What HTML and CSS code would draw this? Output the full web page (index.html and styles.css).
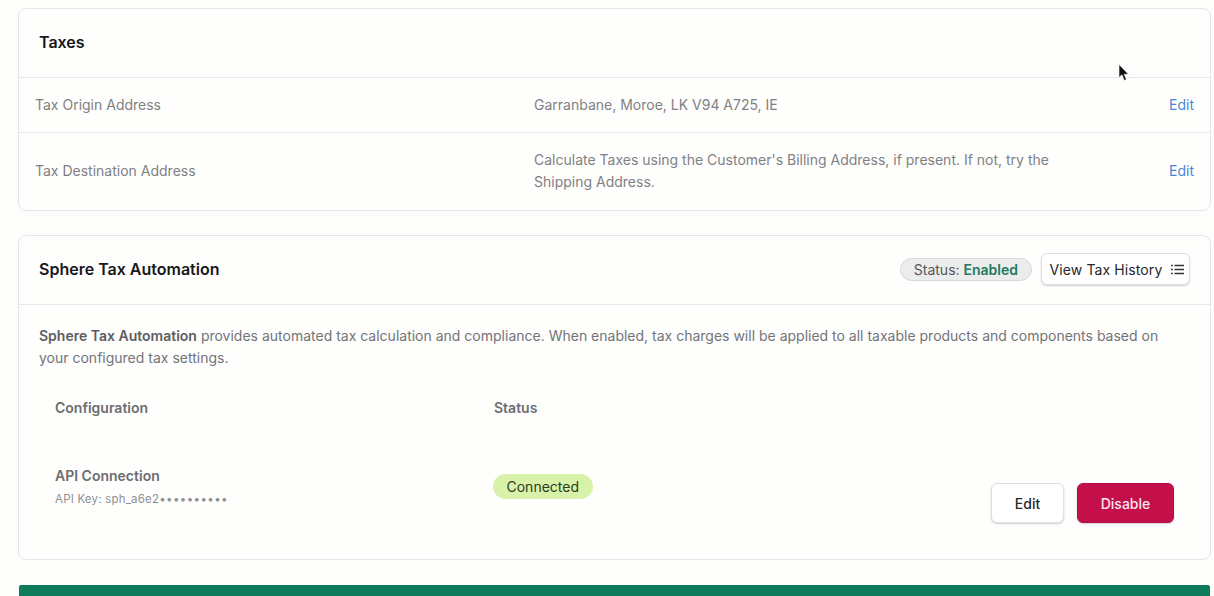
FILE: index.html
```html
<!DOCTYPE html>
<html lang="en">
<head>
  <meta charset="UTF-8" />
  <meta name="viewport" content="width=device-width, initial-scale=1.0"/>
  <title>Tax Settings</title>
  <link rel="stylesheet" href="styles.css">
</head>
<body>
  <main class="page">
    <section class="card taxes-card">
      <header class="card-header taxes-header">
        <h2>Taxes</h2>
      </header>
      <div class="tax-row origin-row">
        <div class="tax-label">Tax Origin Address</div>
        <div class="tax-value">Garranbane, Moroe, LK V94 A725, IE</div>
        <a class="edit-link" href="#">Edit</a>
      </div>
      <div class="tax-row destination-row">
        <div class="tax-label">Tax Destination Address</div>
        <div class="tax-value">Calculate Taxes using the Customer's Billing Address, if present. If not, try the Shipping Address.</div>
        <a class="edit-link" href="#">Edit</a>
      </div>
    </section>

    <section class="card sphere-card">
      <header class="card-header sphere-header">
        <h2>Sphere Tax Automation</h2>
        <div class="header-actions">
          <span class="status-pill">Status: <strong>Enabled</strong></span>
          <button class="btn history-btn">
            View Tax History
            <svg width="13" height="11" viewBox="0 0 13 11" fill="none" stroke="#30333a" stroke-width="1.4">
              <path d="M3.5 1.5H13M3.5 5.5H13M3.5 9.5H13"/>
              <path d="M0 1.5H1.8M0 5.5H1.8M0 9.5H1.8"/>
            </svg>
          </button>
        </div>
      </header>
      <div class="sphere-body">
        <p class="intro"><strong>Sphere Tax Automation</strong> provides automated tax calculation and compliance. When enabled, tax charges will be applied to all taxable products and components based on your configured tax settings.</p>
        <div class="config-table">
          <div class="config-head">
            <div class="col-name">Configuration</div>
            <div>Status</div>
          </div>
          <div class="config-row">
            <div class="col-name">
              <div class="config-title">API Connection</div>
              <div class="config-key">API Key: sph_a6e2<span class="key-dots">••••••••••</span></div>
            </div>
            <div class="col-status"><span class="connected-pill">Connected</span></div>
            <div class="config-actions">
              <button class="btn action-btn">Edit</button>
              <button class="btn action-btn danger-btn">Disable</button>
            </div>
          </div>
        </div>
      </div>
    </section>

    <div class="green-bar"></div>
  </main>

  <!-- Mouse pointer caught in the capture -->
  <svg class="cursor" width="12" height="18" viewBox="0 0 12 18">
    <path d="M1 0.5V13.5L4 10.8L6.2 16.5L8.4 15.6L6.2 10.2H10.5Z" fill="#111" stroke="#fff" stroke-width="0.6"/>
  </svg>
</body>
</html>
```

FILE: styles.css
```css
* {
  box-sizing: border-box;
}

body {
  font-family: Inter, 'Liberation Sans', sans-serif;
  margin: 0;
  height: 596px;
  overflow: hidden;
  background-color: #fdfdfc;
  color: #6f7074;
  font-size: 14px;
}

.page {
  padding: 8px 3px 0 18px;
}

.card {
  background: #fefefd;
  border: 1px solid #e4e5e8;
  border-radius: 8px;
}

.taxes-card {
  margin-bottom: 24px;
}

.sphere-card {
  margin-bottom: 25px;
}

.card-header {
  display: flex;
  align-items: center;
  justify-content: space-between;
  border-bottom: 1px solid #e6e7ea;
  padding-bottom: 2px;
}

.card-header h2 {
  margin: 0;
  font-size: 16px;
  font-weight: 600;
  color: #17181b;
}

.taxes-header {
  height: 69px;
  padding-left: 20px;
}

.sphere-header {
  height: 69px;
  padding-left: 20px;
  padding-right: 20px;
}

.tax-row {
  display: flex;
  align-items: center;
  padding: 0 16px 2px;
}

.origin-row {
  height: 55px;
  border-bottom: 1px solid #e6e7ea;
}

.destination-row {
  height: 77px;
}

.tax-label {
  width: 499px;
  flex-shrink: 0;
  color: #808183;
}

.tax-value {
  flex: 1;
  max-width: 540px;
  margin-top: 1px;
  line-height: 22px;
  color: #808183;
}

.edit-link {
  margin-left: auto;
  color: #4a86d8;
  text-decoration: none;
}

.header-actions {
  display: flex;
  align-items: center;
  gap: 9px;
}

.status-pill {
  height: 23px;
  padding: 0 13px 0 13px;
  display: flex;
  align-items: center;
  background: #ebecec;
  border: 1px solid #d6d7d8;
  border-radius: 12px;
  color: #55565a;
  white-space: pre;
}

.status-pill strong {
  color: #237a5e;
  font-weight: 600;
}

.btn {
  font-family: inherit;
  font-size: 14px;
  font-weight: 500;
  background: #fff;
  border: 1px solid #dfe0e3;
  border-radius: 6px;
  box-shadow: 0 1px 2px rgba(0,0,0,0.18);
  color: #26272b;
}

.history-btn {
  height: 32px;
  width: 149px;
  display: flex;
  align-items: center;
  justify-content: center;
  gap: 9px;
  padding: 0 0 0 3px;
  font-weight: 400;
  letter-spacing: 0.1px;
}

.sphere-body {
  padding: 20px 20px 36px;
}

.intro {
  margin: 0;
  line-height: 22px;
  color: #737478;
}

.intro strong {
  font-weight: 600;
  color: #5c5d61;
}

.config-table {
  padding: 0 16px;
}

.config-head {
  display: flex;
  margin-top: 28px;
  line-height: 22px;
  font-weight: 600;
  color: #6c6d71;
}

.col-name {
  width: 439px;
  flex-shrink: 0;
}

.config-row {
  display: flex;
  align-items: flex-start;
  margin-top: 47px;
}

.config-title {
  font-weight: 600;
  line-height: 20px;
  color: #6c6d71;
}

.config-key {
  margin-top: 5px;
  font-size: 11.5px;
  line-height: 16px;
  color: #8f9094;
  letter-spacing: 0.2px;
}

.key-dots {
  font-size: 11.5px;
  letter-spacing: 0.4px;
}

.col-status {
  margin-top: 8px;
  margin-left: -1px;
}

.connected-pill {
  display: inline-flex;
  align-items: center;
  height: 25px;
  padding: 0 13.5px;
  background: #d9f2a9;
  border-radius: 13px;
  color: #2e3a22;
}

.config-actions {
  margin-left: auto;
  margin-top: 17px;
  display: flex;
  gap: 13px;
}

.action-btn {
  height: 40px;
  width: 73px;
  padding: 0;
}

.danger-btn {
  width: 97px;
  background: #c3104b;
  border-color: #b30e45;
  color: #fbe6ec;
}

.green-bar {
  height: 40px;
  margin: 0 1px;
  background: #0e7c5a;
  border-radius: 2px 2px 0 0;
}

.cursor {
  position: absolute;
  left: 1118px;
  top: 64px;
}
```
